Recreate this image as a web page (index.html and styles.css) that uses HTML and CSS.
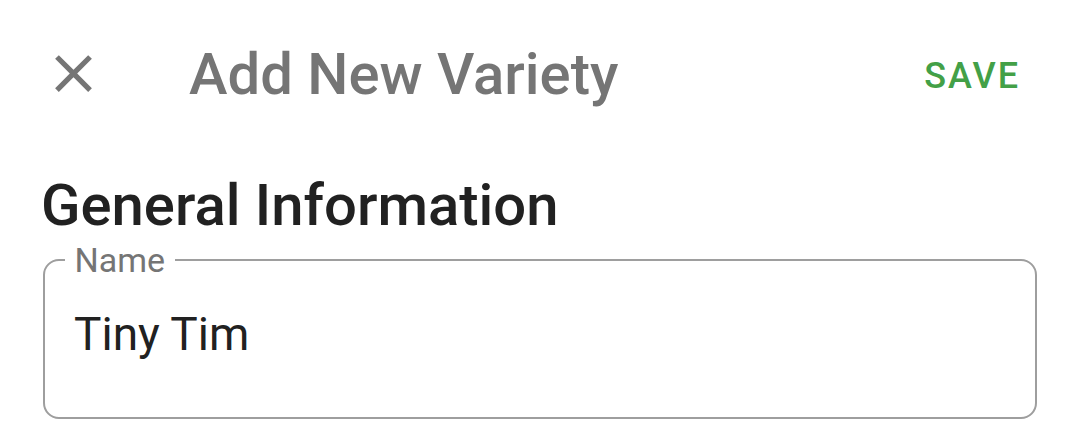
FILE: index.html
```html
<!DOCTYPE html>
<html lang="en">
<head>
<meta charset="utf-8">
<title>Add New Variety</title>
<link rel="stylesheet" href="styles.css">
</head>
<body>
  <header class="toolbar">
    <button class="icon-btn" aria-label="Close">
      <svg class="close-icon" viewBox="0 0 24 24" width="63" height="63"><path d="M19 6.41L17.59 5 12 10.59 6.41 5 5 6.41 10.59 12 5 17.59 6.41 19 12 13.41 17.59 19 19 17.59 13.41 12z"/></svg>
    </button>
    <h1 class="title">Add New Variety</h1>
    <button class="save-btn">SAVE</button>
  </header>
  <main class="content">
    <h2 class="section-title">General Information</h2>
    <fieldset class="field">
      <legend class="field-label">Name</legend>
      <div class="field-value">Tiny Tim</div>
    </fieldset>
  </main>
</body>
</html>
```

FILE: styles.css
```css
html, body {
  margin: 0;
  padding: 0;
  background: #ffffff;
}
body {
  width: 1080px;
  height: 425px;
  overflow: hidden;
  font-family: Roboto, "Noto Sans", sans-serif;
}
.toolbar {
  height: 147px;
  display: flex;
  align-items: center;
  padding: 0 60px 0 42px;
  box-sizing: border-box;
}
.icon-btn {
  border: 0;
  background: none;
  padding: 0;
  margin: 0;
  width: 63px;
  height: 63px;
  display: flex;
  align-items: center;
  justify-content: center;
}
.close-icon {
  fill: #757575;
  display: block;
}
.title {
  flex: 1;
  margin: 0 0 0 84px;
  font-size: 58px;
  font-weight: 500;
  color: #757575;
  line-height: 1;
  white-space: nowrap;
}
.save-btn {
  border: 0;
  background: none;
  padding: 4px 0 0 0;
  margin: 0;
  font-family: Roboto, sans-serif;
  font-size: 36px;
  font-weight: 500;
  color: #43a047;
  letter-spacing: 2px;
  line-height: 1;
}
.content {
  padding: 0 43px;
}
.section-title {
  margin: 24px 0 0 -2px;
  font-size: 58px;
  font-weight: 500;
  color: #212121;
  line-height: 68px;
}
.field {
  margin: 4px 0 0 0;
  border: 2.5px solid #9e9e9e;
  border-radius: 16px;
  padding: 29px 29px 55px 29px;
  min-width: 0;
}
.field-label {
  margin-left: -9.5px;
  padding: 0 10px;
  font-size: 34px;
  line-height: 34px;
  color: #757575;
}
.field-value {
  font-size: 46px;
  line-height: 56px;
  color: #212121;
}
```
